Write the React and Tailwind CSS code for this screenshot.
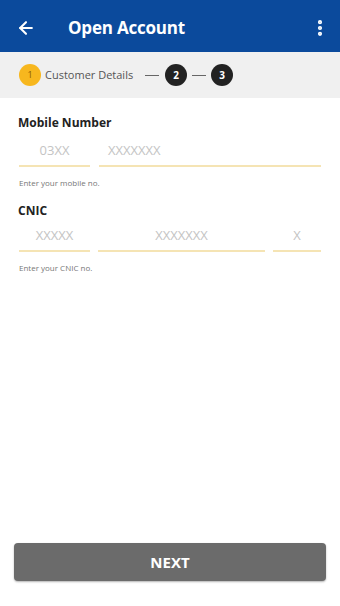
import { ArrowLeft, EllipsisVertical } from 'lucide-react';

function Field({ placeholder, className, align = 'text-center' }) {
  return (
    <div className={`flex flex-col ${className}`}>
      <div className={`h-[26px] flex items-center text-[13px] text-[#c4c4c4] ${align}`}>
        <span className="w-full">{placeholder}</span>
      </div>
      <div className="h-[2px] bg-[#f5e4b4] mt-[1px]" />
    </div>
  );
}

export default function App() {
  return (
    <div className="w-[340px] h-[606px] bg-white flex flex-col font-['Open_Sans',sans-serif] overflow-hidden">
      {/* toolbar */}
      <div className="h-[52px] bg-[#0b4a9c] flex items-center px-[16px] pt-[3px] text-white shrink-0">
        <ArrowLeft className="w-[20px] h-[20px]" strokeWidth={2.5} />
        <span className="ml-[32px] text-[17px] font-bold tracking-[-0.2px]">Open Account</span>
        <EllipsisVertical className="ml-auto w-[20px] h-[20px] -mr-[6px]" strokeWidth={3} />
      </div>

      {/* stepper */}
      <div className="h-[46px] bg-[#f0f0f0] flex items-center px-[19px] shrink-0">
        <div className="w-[22px] h-[22px] rounded-full bg-[#f7b71e] flex items-center justify-center text-[9px] text-[#8a5a00]">1</div>
        <span className="ml-[4px] text-[11px] text-[#555]">Customer Details</span>
        <div className="ml-[12px] w-[14px] h-[1px] bg-[#666]" />
        <div className="ml-[6px] w-[22px] h-[22px] rounded-full bg-[#222] flex items-center justify-center text-[10px] font-bold text-white">2</div>
        <div className="ml-[5px] w-[14px] h-[1px] bg-[#666]" />
        <div className="ml-[5px] w-[22px] h-[22px] rounded-full bg-[#222] flex items-center justify-center text-[10px] font-bold text-white">3</div>
      </div>

      {/* form */}
      <div className="flex-1 px-[19px] pt-[16px] flex flex-col">
        <div className="text-[12px] font-bold text-[#222] -ml-[1px]">Mobile Number</div>
        <div className="flex gap-[9px] mt-[6px]">
          <Field placeholder="03XX" className="w-[71px]" />
          <Field placeholder="XXXXXXX" className="flex-1" align="text-left pl-[9px]" />
        </div>
        <div className="text-[8px] text-[#777] mt-[10px]">Enter your mobile no.</div>

        <div className="text-[12px] font-bold text-[#222] mt-[13px] -ml-[1px]">CNIC</div>
        <div className="flex gap-[8px] mt-[3px]">
          <Field placeholder="XXXXX" className="w-[71px]" />
          <Field placeholder="XXXXXXX" className="flex-1" />
          <Field placeholder="X" className="w-[48px]" />
        </div>
        <div className="text-[8px] text-[#777] mt-[10px]">Enter your CNIC no.</div>
      </div>

      {/* button */}
      <div className="px-[14px] pb-[25px] shrink-0">
        <button className="w-full h-[38px] bg-[#6b6b6b] rounded-[4px] text-white font-bold text-[15px] shadow-[0_1px_2px_rgba(0,0,0,0.3)]">
          NEXT
        </button>
      </div>
    </div>
  );
}
